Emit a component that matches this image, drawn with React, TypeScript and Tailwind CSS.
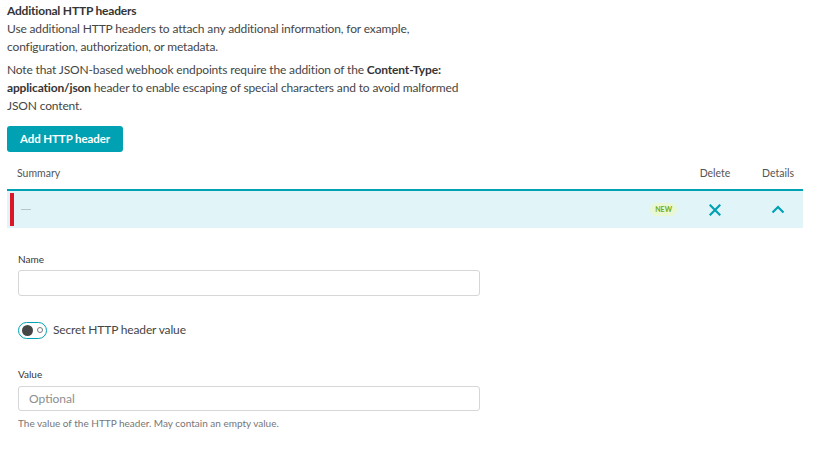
import React from "react";

export default function App() {
  return (
    <div className="w-[819px] h-[461px] bg-white text-[#454646] overflow-hidden" style={{ fontFamily: "Lato, 'Open Sans', sans-serif" }}>
      <div className="pl-[7px] pr-[16px] pt-[2px]">
        <div className="text-[12px] leading-[18px] font-bold tracking-[-0.2px] text-[#353535]">Additional HTTP headers</div>
        <p className="text-[12px] leading-[18px] tracking-[-0.15px] w-[468px]">
          Use additional HTTP headers to attach any additional information, for example, configuration, authorization, or metadata.
        </p>
        <p className="text-[12px] leading-[18px] tracking-[-0.15px] mt-[5px] w-[468px]">
          Note that JSON-based webhook endpoints require the addition of the <b className="text-[#353535]">Content-Type: application/json</b> header to enable escaping of special characters and to avoid malformed JSON content.
        </p>
        <button className="mt-[11px] h-[26px] px-[13px] rounded-[3px] bg-[#00a1b2] text-white text-[11.5px] font-bold tracking-[-0.1px]">
          Add HTTP header
        </button>

        <div className="mt-[11px] flex items-center h-[22px] text-[10.5px] text-[#555]">
          <div className="flex-1 pl-[10px]">Summary</div>
          <div className="w-[76px] text-center">Delete</div>
          <div className="w-[50px] text-center">Details</div>
        </div>
        <div className="mt-[4px] border-t-2 border-[#00a1b2] bg-[#e1f5f8] h-[39px] flex items-center">
          <div className="ml-[3px] w-[4px] h-[33px] bg-[#dc172a]" />
          <div className="ml-[7px] w-[10px] h-[1px] bg-[#b7c4c8]" />
          <div className="flex-1" />
          <span className="px-[5px] h-[13px] leading-[13px] rounded-full bg-[#e9f8d2] text-[#6fac1c] text-[7px] font-bold">NEW</span>
          <div className="w-[76px] flex justify-center">
            <svg width="12" height="12" viewBox="0 0 12 12">
              <path d="M1.5 1.5L10.5 10.5M10.5 1.5L1.5 10.5" stroke="#00a1b2" strokeWidth="2.2" strokeLinecap="square" />
            </svg>
          </div>
          <div className="w-[50px] flex justify-center">
            <svg width="14" height="9" viewBox="0 0 14 9">
              <path d="M1.5 7.5L7 2L12.5 7.5" fill="none" stroke="#00a1b2" strokeWidth="2.2" />
            </svg>
          </div>
        </div>

        <div className="pl-[11px] pt-[24px]">
          <div className="text-[10px] leading-[14px] text-[#353535]">Name</div>
          <div className="mt-[4px] w-[462px] h-[26px] border border-[#d4d6d7] rounded-[3px] bg-white" />

          <div className="mt-[25px] flex items-center">
            <div className="w-[29px] h-[17px] rounded-full border border-[#00a1b2] flex items-center px-[3px] gap-[4px]">
              <div className="w-[11px] h-[11px] rounded-full bg-[#454646]" />
              <div className="w-[6px] h-[6px] rounded-full border border-[#777]" />
            </div>
            <span className="ml-[6px] text-[12px] tracking-[-0.15px] text-[#454646]">Secret HTTP header value</span>
          </div>

          <div className="mt-[28px] text-[10px] leading-[14px] text-[#353535]">Value</div>
          <div className="mt-[5px] w-[462px] h-[25px] border border-[#d4d6d7] rounded-[3px] bg-white flex items-center pl-[10px] text-[12px] text-[#8c8e90]">
            Optional
          </div>
          <div className="mt-[5px] text-[10px] leading-[14px] text-[#767676]">The value of the HTTP header. May contain an empty value.</div>
        </div>
      </div>
    </div>
  );
}
